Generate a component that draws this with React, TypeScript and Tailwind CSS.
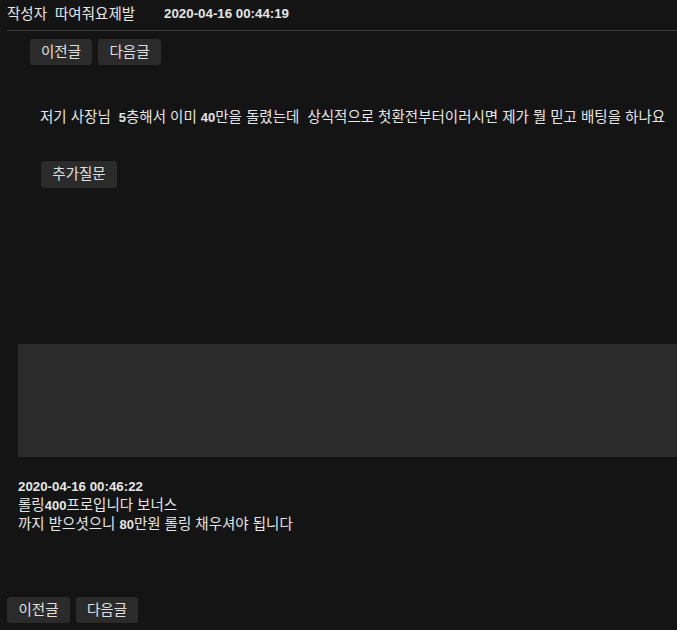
const font = { fontFamily: '"Liberation Sans", "Noto Sans CJK KR", sans-serif' };

function NavButton({ label, className = '' }: { label: string; className?: string }) {
  return (
    <button
      className={`h-[26px] w-[62px] rounded-[3px] bg-[#2b2b2b] text-[14.5px] leading-[26px] text-[#e0e0e0] ${className}`}
    >
      {label}
    </button>
  );
}

function Num({ children }: { children: React.ReactNode }) {
  return <b className="text-[13px]">{children}</b>;
}

export default function App() {
  return (
    <div className="h-[630px] w-[677px] overflow-hidden bg-[#141414] text-[14.5px] text-[#e6e6e6]" style={font}>
      <header className="ml-[7px] flex h-[31px] items-center border-b border-[#3a3a3a] pb-[3px] leading-[18px]">
        <span>작성자</span>
        <span className="ml-[8px]">따여줘요제발</span>
        <span className="ml-[29px] text-[13.3px] font-bold">2020-04-16 00:44:19</span>
      </header>

      <div className="ml-[30px] mt-[8px] flex gap-[6px]">
        <NavButton label="이전글" />
        <NavButton label="다음글" className="w-[63px]" />
      </div>

      <p className="ml-[40px] mt-[43px] whitespace-nowrap leading-[18px]">
        저기 사장님 &nbsp;<Num>5</Num>층해서 이미 <Num>40</Num>만을 돌렸는데 &nbsp;상식적으로 첫환전부터이러시면 제가 뭘 믿고 배팅을 하나요
      </p>

      <button className="ml-[41px] mt-[34px] h-[27px] w-[76px] rounded-[3px] bg-[#2b2b2b] text-[14.5px] leading-[27px] text-[#e0e0e0]">
        추가질문
      </button>

      <div className="ml-[18px] mt-[156px] h-[113px] bg-[#2b2b2b]" />

      <div className="ml-[18px] mt-[21px] leading-[18px]">
        <div className="text-[13.3px] font-bold">2020-04-16 00:46:22</div>
        <div>
          롤링<Num>400</Num>프로입니다 보너스
        </div>
        <div>
          까지 받으셧으니 <Num>80</Num>만원 롤링 채우셔야 됩니다
        </div>
      </div>

      <div className="ml-[7px] mt-[63px] flex gap-[6px]">
        <NavButton label="이전글" className="w-[63px]" />
        <NavButton label="다음글" className="w-[62px]" />
      </div>
    </div>
  );
}
